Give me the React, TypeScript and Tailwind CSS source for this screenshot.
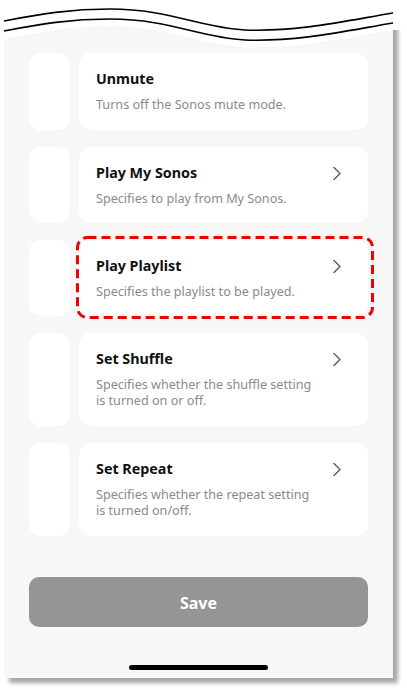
import React from "react";

const Chevron = () => (
  <svg width="10" height="15" viewBox="0 0 10 15" className="shrink-0">
    <path d="M2 1.5 L8 7.5 L2 13.5" fill="none" stroke="#666666" strokeWidth="1.6" strokeLinecap="round" strokeLinejoin="round" />
  </svg>
);

type Row = { title: string; lines: string[]; chevron: boolean; h: string; highlight?: boolean };

const rows: Row[] = [
  { title: "Unmute", lines: ["Turns off the Sonos mute mode."], chevron: false, h: "h-[77px]" },
  { title: "Play My Sonos", lines: ["Specifies to play from My Sonos."], chevron: true, h: "h-[76px]" },
  { title: "Play Playlist", lines: ["Specifies the playlist to be played."], chevron: true, h: "h-[76px]", highlight: true },
  { title: "Set Shuffle", lines: ["Specifies whether the shuffle setting", "is turned on or off."], chevron: true, h: "h-[93px]" },
  { title: "Set Repeat", lines: ["Specifies whether the repeat setting", "is turned on/off."], chevron: true, h: "h-[93px]" },
];

export default function App() {
  return (
    <div className="relative w-[407px] h-[693px] bg-white overflow-hidden" style={{ fontFamily: '"Noto Sans", "Open Sans", sans-serif' }}>
      <div className="ml-[4px] w-[389px] h-[678px] bg-[#f7f7f7] shadow-[5px_5px_4px_rgba(0,0,0,0.35)] flex flex-col pl-[25px] pr-[25px] pt-[53px]">
        <div className="flex flex-col gap-[17px]">
          {rows.map((r) => (
            <div key={r.title} className={`flex gap-[9px] ${r.h}`}>
              <div className="w-[41px] bg-white rounded-[12px]" />
              <div className="relative flex-1 bg-white rounded-[12px] pl-[17px] pr-[26px] pt-[16px]">
                <div className="flex items-center justify-between h-[20px]">
                  <span className="text-[14.3px] font-bold text-[#111111] leading-[20px]">{r.title}</span>
                  {r.chevron && <Chevron />}
                </div>
                <div className="mt-[8px] text-[12.6px] leading-[15.5px] text-[#8a8a8a]">
                  {r.lines.map((l) => (
                    <div key={l}>{l}</div>
                  ))}
                </div>
                {r.highlight && (
                  <svg className="absolute left-[-3px] top-[-4px]" width="298" height="83" viewBox="0 0 298 83">
                    <rect x="1.5" y="1.5" width="295" height="80" rx="10" fill="none" stroke="#f00000" strokeWidth="3" strokeDasharray="9 5" />
                  </svg>
                )}
              </div>
            </div>
          ))}
        </div>
        <div className="mt-[41px] h-[50px] rounded-[10px] bg-[#959595] flex items-center justify-center">
          <span className="text-white font-bold text-[16px] leading-[22px] mt-[2px]">Save</span>
        </div>
        <div className="mt-[38px] flex justify-center">
          <div className="w-[139px] h-[5px] rounded-full bg-black" />
        </div>
      </div>
      <svg className="absolute left-0 top-0" width="407" height="60" viewBox="0 0 407 60">
        <path d="M0 0 H407 V30 L393 30 C350 37, 300 49, 245 47 C200 45, 170 26, 110 26 C70 26, 40 32, 0 40 Z" fill="#ffffff" />
        <path d="M4 21 C40 14, 70 9, 110 9 C170 9, 200 28, 245 30 C300 32, 350 20, 393 13" fill="none" stroke="#000" strokeWidth="1.6" />
        <path d="M4 31 C40 24, 70 19, 110 19 C170 19, 200 38, 245 40 C300 42, 350 30, 393 23" fill="none" stroke="#000" strokeWidth="1.6" />
      </svg>
    </div>
  );
}
